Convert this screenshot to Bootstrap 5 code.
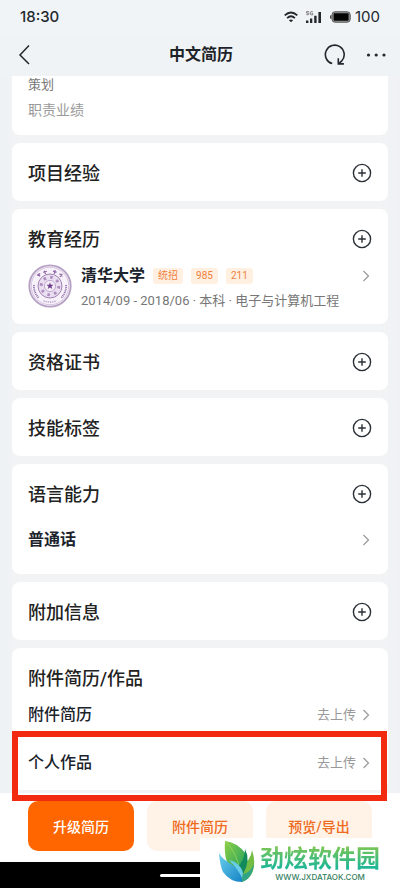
<!DOCTYPE html>
<html lang="zh-CN">
<head>
<meta charset="utf-8">
<meta name="viewport" content="width=device-width, initial-scale=1">
<title>中文简历</title>
<link href="https://cdn.jsdelivr.net/npm/bootstrap@5.3.0/dist/css/bootstrap.min.css" rel="stylesheet">
<style>
body{font-family:Roboto,"Noto Sans CJK SC",sans-serif;background:linear-gradient(90deg,#edf2f6 0,#f2f3f4 16px,#f2f3f4 calc(100% - 16px),#eff1f6 100%);color:#222;line-height:26px}
svg{display:block;flex:none}
button{font:inherit}
.statusbar{height:34px;padding:0 20px;font:500 15px/34px Inter,sans-serif;color:#23282e;background:#f0f4f7}
.statusbar .level{font-weight:400}
.topbar{height:42px;padding:0 14px 0 16px;background:#f0f3f6}
.topbar h1{font-size:16px;line-height:42px;font-weight:700;color:#1d2329}
.topbar .side{width:80px}
.plain{border:0;background:none;padding:0;color:#23282e}
.stack{gap:8px;padding:0 12px 3px}
.panel{background:#fff;border-radius:8px;padding:17px 16px 15px}
.panel-first{border-radius:0 0 8px 8px;padding-top:1px;padding-bottom:17px}
.panel-last{padding-bottom:3px}
.panel h2{font-size:18px;line-height:24px;padding-top:2px;font-weight:500;margin:0;color:#222}
.dim{font-size:13px;line-height:16px;color:#777}
.dim-light{font-size:14px;line-height:16px;color:#999;margin-top:9px}
.entry{color:#1b232c;text-decoration:none;font-size:16px;font-weight:500}
.entry-school{margin-top:12px;gap:9px;height:45px}
.entry-lang{margin-top:13px;height:39px}
.entry-school,.entry-lang{font-weight:700}
.entry-file{height:48px}
.school-line{line-height:24px;gap:8px}
.label-tag{font-size:10px;line-height:16px;font-weight:400;color:#f0813c;background:#fff0e2;border-radius:3px;padding:0 5px}
.school-meta{font-size:13px;line-height:22px;font-weight:400;color:#777;margin-top:2px}
.upload{font-size:13px;font-weight:400;color:#999;gap:6px}
.chev{color:#999;margin-right:2px}
.frame{position:absolute;inset:-8px -15px -14px -16px;border:6px solid #f12a10;z-index:2;pointer-events:none}
.actions{background:#fff;padding:8px 28px 11px;gap:13px}
.actions button{flex:1 1 0;height:50px;border:0;border-radius:10px;padding:2px 0 0;background:#fff3e8;color:#ee6a1c;font-size:14px;font-weight:500}
.actions .main-action{background:#ff6600;color:#fff}
.navstrip{height:26px;background:#000}
.homebar{width:80px;height:3px;background:#fff;border-radius:2px}
.sitemark{position:absolute;right:0;bottom:0;width:50%;height:50px;background:#fff;padding:0 0 2px 18px;gap:4px;z-index:3}
.sitemark .brand{font-family:"Noto Sans CJK SC",sans-serif;font-size:24px;line-height:30px;font-weight:700;background:linear-gradient(180deg,#7cc653 15%,#1fb795 85%);-webkit-background-clip:text;background-clip:text;color:transparent}
.sitemark .addr{font:500 8px/10px Inter,sans-serif;color:#35805f}
</style>
</head>
<body>
<svg width="0" height="0" class="position-absolute" aria-hidden="true">
<defs>
<symbol id="plus" viewBox="0 0 20 20"><g fill="none" stroke="#2b3036" stroke-width="1.4"><circle cx="10" cy="10" r="8.6"/><path d="M10 6.2v7.6M6.2 10h7.6"/></g></symbol>
<symbol id="chev" viewBox="0 0 8 12"><path d="M1.5 1l5 5-5 5" fill="none" stroke="#999" stroke-width="1.2"/></symbol>
</defs>
</svg>
<div class="position-relative d-flex flex-column min-vh-100">
<div class="statusbar d-flex justify-content-between align-items-center">
<span>18:30</span>
<div class="d-flex align-items-center">
<svg width="14" height="12" viewBox="0 0 14 12" fill="none" stroke="#23282e" stroke-width="1.8"><path d="M.7 4.4Q7-1.4 13.3 4.4M3.1 7.1Q7 3.5 10.9 7.1"/><path d="M7 11.3L4.9 9.3Q7 7.6 9.1 9.3z" fill="#23282e" stroke="none"/></svg>
<svg class="ms-2" width="16" height="12" viewBox="0 0 16 12" fill="#23282e"><path d="M0 9.5h2.4V12H0zM4 7.5h2.3V12H4zM8.2 4.7h2.4V12H8.2zM12.4 1h2.6v11h-2.6z"/><path d="M3 .6H.6v1.5h1.5q.8 0 .8.8t-.8.8H.3M6.8.7H5.2q-.9 0-.9 1v1.2q0 .9.9.9h1.5V2.4H5.6" fill="none" stroke="#555" stroke-width=".7"/></svg>
<svg class="ms-2" width="21" height="12" viewBox="0 0 21 12"><rect x="2" y=".8" width="18.2" height="10.4" rx="3" fill="#999" stroke="#555"/><rect x="3.6" y="2.2" width="15" height="7.6" rx="1" fill="#050505"/><path d="M1.3 4Q0 4 0 6t1.3 2z" fill="#333"/></svg>
<span class="level ms-1">100</span>
</div>
</div>
<header class="topbar d-flex align-items-center justify-content-between">
<div class="side"><button class="plain d-block" type="button" aria-label="返回"><svg width="16" height="22" viewBox="0 0 16 22" fill="none" stroke="#23282e" stroke-width="1.5"><path d="M13 1.5L4 11l9 9"/></svg></button></div>
<h1 class="m-0">中文简历</h1>
<div class="side d-flex justify-content-end align-items-center">
<button class="plain" type="button" aria-label="刷新"><svg width="22" height="22" viewBox="0 0 22 22" fill="none" stroke="#23282e" stroke-width="1.6"><path d="M8.2 19.6A9.4 9.4 0 1 1 18 16.6L14.6 19.8M14.3 14.2v5.7h5.6"/></svg></button>
<button class="plain ms-3" type="button" aria-label="更多"><svg class="ms-1" width="20" height="6" viewBox="0 0 20 6" fill="#23282e"><circle cx="2.5" cy="3" r="1.6"/><circle cx="10.2" cy="3" r="1.6"/><circle cx="18" cy="3" r="1.6"/></svg></button>
</div>
</header>
<main class="stack d-flex flex-column flex-grow-1">
<section class="panel panel-first"><div class="dim">策划</div><div class="dim-light">职责业绩</div></section>
<section class="panel"><div class="d-flex justify-content-between align-items-center"><h2>项目经验</h2><button class="plain" type="button" aria-label="添加项目经验"><svg width="20" height="20"><use href="#plus"/></svg></button></div></section>
<section class="panel">
<div class="d-flex justify-content-between align-items-center"><h2>教育经历</h2><button class="plain" type="button" aria-label="添加教育经历"><svg width="20" height="20"><use href="#plus"/></svg></button></div>
<a href="#" class="entry entry-school d-flex">
<svg width="44" height="44" viewBox="0 0 44 44" fill="none" stroke="#a382b5">
<circle cx="22" cy="22" r="20.7" fill="#f7f1fa" stroke="#b5a0c3" stroke-width="1.8"/>
<circle cx="22" cy="22" r="18.8" stroke="#c5b0d2" stroke-width=".7"/>
<circle cx="22" cy="22" r="12" fill="#eadff0" stroke-width="1"/>
<circle cx="22" cy="22" r="8.8" stroke="#b08fc0" stroke-width="3" stroke-dasharray="2.6 4.3"/>
<circle cx="22" cy="22" r="5.6" fill="#f5eef8" stroke-width=".6"/>
<path d="M22 18.3l.9 2.5h2.7l-2.1 1.6.8 2.6-2.3-1.5-2.3 1.5.8-2.6-2.1-1.6h2.7z" fill="#70408f" stroke="none"/>
<path d="M9.2 11.6l3-2.2M10 9.8l2 2.6M15.4 8.5l3.4-1.3M16.2 6.8l1.4 3.3M25 7.2l3.6 1M27.3 6.2l-1 3.6M31.5 9.8l3 2.6M34.3 10l-2.4 2.8" stroke="#8e65a5" stroke-width="1.2"/>
<path d="M6 21a16 16 0 0 0 5 13M38 21a16 16 0 0 1-5 13" stroke="#9571ab" stroke-width="1.8" stroke-dasharray="1.1 .7"/>
<path d="M15.5 36.7a16 16 0 0 0 13 0" stroke-width="1.1" stroke-dasharray="1.2 1"/>
</svg>
<div class="flex-grow-1">
<div class="school-line d-flex align-items-center"><span>清华大学</span><span class="label-tag">统招</span><span class="label-tag">985</span><span class="label-tag">211</span><svg class="chev ms-auto" width="8" height="12"><use href="#chev"/></svg></div>
<div class="school-meta text-nowrap">2014/09 - 2018/06 · 本科 · 电子与计算机工程</div>
</div>
</a>
</section>
<section class="panel"><div class="d-flex justify-content-between align-items-center"><h2>资格证书</h2><button class="plain" type="button" aria-label="添加资格证书"><svg width="20" height="20"><use href="#plus"/></svg></button></div></section>
<section class="panel"><div class="d-flex justify-content-between align-items-center"><h2>技能标签</h2><button class="plain" type="button" aria-label="添加技能标签"><svg width="20" height="20"><use href="#plus"/></svg></button></div></section>
<section class="panel">
<div class="d-flex justify-content-between align-items-center"><h2>语言能力</h2><button class="plain" type="button" aria-label="添加语言能力"><svg width="20" height="20"><use href="#plus"/></svg></button></div>
<a href="#" class="entry entry-lang d-flex justify-content-between align-items-center"><span>普通话</span><svg class="chev" width="8" height="12"><use href="#chev"/></svg></a>
</section>
<section class="panel"><div class="d-flex justify-content-between align-items-center"><h2>附加信息</h2><button class="plain" type="button" aria-label="添加附加信息"><svg width="20" height="20"><use href="#plus"/></svg></button></div></section>
<section class="panel panel-last">
<h2>附件简历/作品</h2>
<a href="#" class="entry entry-file d-flex justify-content-between align-items-center"><span>附件简历</span><span class="upload d-flex align-items-center">去上传<svg class="chev" width="8" height="12"><use href="#chev"/></svg></span></a>
<div class="position-relative"><a href="#" class="entry entry-file d-flex justify-content-between align-items-center"><span>个人作品</span><span class="upload d-flex align-items-center">去上传<svg class="chev" width="8" height="12"><use href="#chev"/></svg></span></a><div class="frame"></div></div>
</section>
</main>
<footer>
<div class="actions d-flex"><button class="main-action" type="button">升级简历</button><button type="button">附件简历</button><button type="button">预览/导出</button></div>
<div class="navstrip d-flex justify-content-center align-items-center"><div class="homebar"></div></div>
</footer>
<div class="sitemark d-flex align-items-center">
<svg width="38" height="44" viewBox="0 0 38 44">
<defs><linearGradient id="leaf" x1="0" y1="0" x2="1" y2="1"><stop offset="0" stop-color="#8fd046"/><stop offset="1" stop-color="#149b62"/></linearGradient><linearGradient id="hand" x1="0" y1="0" x2="1" y2="1"><stop offset="0" stop-color="#6bd0ee"/><stop offset="1" stop-color="#1583c4"/></linearGradient></defs>
<path d="M34 10Q38 22 35 31 32 39 24 42L22 26Q33 21 34 10z" fill="#74bd45"/>
<path d="M7 1Q6 14 9 22L24 35Q31 26 28 14 19 2 7 1z" fill="url(#leaf)"/>
<path d="M8 2Q19 13 23 33" fill="none" stroke="#9dd961" stroke-width=".7"/>
<path d="M27 9Q33 20 25 34L20 26Q27 20 27 9z" fill="#138a5b"/>
<path d="M1 13Q3 17 7 20L20 29Q26 34 24 42 12 42 5 32 2 26 1 13z" fill="url(#hand)"/>
<path d="M11 20Q18 21 23 28 26 32 24 38 20 29 11 20z" fill="#69cce8"/>
<path d="M24 42Q34 39 36 24 32 33 25 34z" fill="#2fa487"/>
</svg>
<div class="d-flex flex-column align-items-center text-nowrap"><span class="brand">劲炫软件园</span><span class="addr">WWW.JXDATAOK.COM</span></div>
</div>
</div>
<script src="https://cdn.jsdelivr.net/npm/bootstrap@5.3.0/dist/js/bootstrap.bundle.min.js"></script>
</body>
</html>
